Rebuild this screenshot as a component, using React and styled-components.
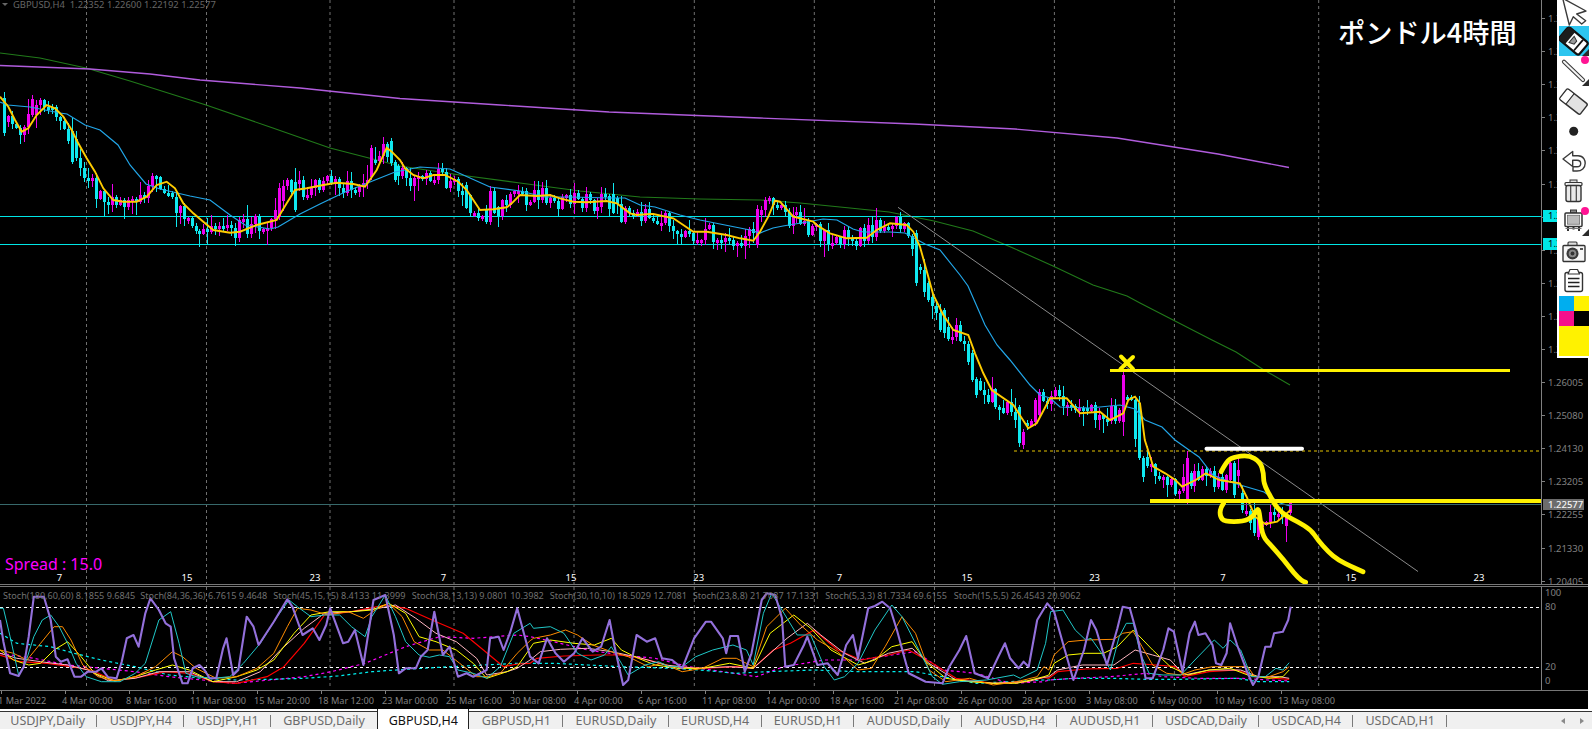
import React from "react";
import styled, { createGlobalStyle } from "styled-components";

const Global = createGlobalStyle`
  html, body { margin: 0; padding: 0; background: #fff; overflow: hidden; }
  #root { width: 1592px; height: 729px; }
`;

/* ---------- data helpers ---------- */
const pts = (bx, by, fx, fy, s) =>
  s.trim().split(/\s+/).map((p) => {
    const [a, b] = p.split(",").map(Number);
    return [bx + a / fx, by + b / fy];
  });
const join = (...lists) => {
  const out = [];
  lists.flat().forEach((p) => {
    if (!out.length || p[0] > out[out.length - 1][0]) out.push(p);
  });
  return out;
};
const poly = (a) => a.map((p) => `${p[0].toFixed(1)},${p[1].toFixed(1)}`).join(" ");
const smoothPath = (a) => {
  let d = `M${a[0][0].toFixed(1)} ${a[0][1].toFixed(1)}`;
  for (let i = 1; i < a.length - 1; i++) {
    const mx = (a[i][0] + a[i + 1][0]) / 2;
    const my = (a[i][1] + a[i + 1][1]) / 2;
    d += `Q${a[i][0].toFixed(1)} ${a[i][1].toFixed(1)} ${mx.toFixed(1)} ${my.toFixed(1)}`;
  }
  const l = a[a.length - 1];
  return `${d}L${l[0].toFixed(1)} ${l[1].toFixed(1)}`;
};
const interp = (line, x) => {
  if (x <= line[0][0]) return line[0][1];
  for (let i = 1; i < line.length; i++) {
    if (x <= line[i][0]) {
      const [x0, y0] = line[i - 1];
      const [x1, y1] = line[i];
      return y0 + ((y1 - y0) * (x - x0)) / (x1 - x0);
    }
  }
  return line[line.length - 1][1];
};
const rng = (seed) => () => {
  seed |= 0;
  seed = (seed + 0x6d2b79f5) | 0;
  let t = Math.imul(seed ^ (seed >>> 15), 1 | seed);
  t = (t + Math.imul(t ^ (t >>> 7), 61 | t)) ^ t;
  return ((t ^ (t >>> 14)) >>> 0) / 4294967296;
};

const F3 = 1568 / 532;
const YELLOW = join(
  pts(0, 0, 3, 3, "0,290 25,320 45,360 65,395 85,385 110,345 140,315 165,325 190,350 215,390 235,430 260,475 285,515 310,565 340,600 370,605 410,605 440,590 470,555 500,545 525,565 550,610 580,640 610,665 640,690 690,698 720,695 770,675 830,660 860,610 885,570 920,565 970,555 1010,548 1060,552 1095,560 1130,510 1160,443 1175,455 1200,480"),
  pts(380, 120, 3, 3, "20,82 35,95 75,145 100,165 130,175 160,165 195,165 235,185 260,210 300,270 340,268 380,262 395,250 420,225 470,228 510,225 540,235 580,245 620,247 680,243 710,250 750,280 770,285 810,282"),
  pts(640, 170, 3, 3, "0,132 40,132 100,145 130,165 160,185 200,185 260,195 300,205 340,212 360,185 385,140 405,92 420,95 460,140 520,155 530,165 570,190 620,205 680,203 710,180 750,160 800,165"),
  pts(880, 190, 3, 3, "0,110 60,100 100,125 120,170 160,315 190,375 220,420 265,435 285,490 310,550 335,600 400,645 445,715 470,700 510,625 560,625 600,670 660,665 690,690 730,670 745,630 765,620 780,640"),
  pts(1060, 340, F3, 3, "235,220 250,300 275,380 310,400 340,420 360,440 400,420 430,400 470,420 530,430 550,470 575,530 605,552 640,545 680,510")
);
const BLUE = [[0,102],[8,105],[30,107],[60,113],[67,114],[85,125],[100,130],[118,145],[130,165],[146,184],[160,189],[190,196],[210,200],[230,215],[245,225],[270,229],[278,227],[300,214],[320,204],[345,192],[380,178],[395,172],[420,167],[450,169],[470,178],[490,187],[520,191],[545,197],[570,197],[610,198],[625,198],[640,205],[655,207],[680,215],[700,220],[720,224],[750,230],[760,233],[773,228],[783,226],[807,222],[823,219],[837,220],[853,229],[863,232],[890,232],[905,233],[925,244],[940,250],[960,275],[968,286],[985,325],[997,345],[1010,360],[1030,385],[1040,395],[1050,398],[1060,407],[1090,408],[1120,405],[1135,409],[1145,420],[1162,427],[1175,440],[1189,450],[1199,457],[1213,475],[1230,482],[1264,492],[1280,503],[1290,506]];
const GREEN = [[0,53],[40,58],[86,68],[130,81],[206,105],[270,127],[330,148],[400,166],[460,175],[520,183],[580,191],[640,197],[700,199],[760,200],[800,203],[850,208],[889,212],[934,221],[973,231],[1013,248],[1053,266],[1093,285],[1127,296],[1140,303],[1212,340],[1236,352],[1264,370],[1290,385]];
const PURPLE = [[0,65.5],[90,69],[150,74],[200,80],[300,88],[400,98.5],[500,105],[609,112],[760,118],[914,124],[1015,129],[1117,138],[1218,154],[1289,167.5]];

/* big candles read from the reference: x, open, close, top wick, bottom wick, bull */
const BIG = [
  [6,98,133,92,136,0],[33,99,115,95,117,1],[73,131,162,118,164,0],[278,188,217,183,220,1],[295,182,210,168,212,0],[370,148,177,145,180,1],[390,141,163,138,166,0],[395,162,180,160,182,0],
  [466,185,208,182,209,0],[487,209,222,205,224,0],[490,191,222,186,225,1],[494,191,213,188,214,0],[614,194,213,183,214,0],
  [758,209,245,205,248,1],[918,233,283,230,286,0],[927,283,300,281,302,0],[943,310,333,308,338,0],[974,353,380,350,382,0],[978,379,395,377,398,0],
  [1018,407,443,405,447,0],[1023,432,445,429,449,1],[1037,400,422,398,426,1],
  [1123,375,422,372,436,1],[1139,403,458,396,460,0],[1143,458,477,456,482,0],[1187,458,501,451,504,1],[1231,463,480,462,483,1],[1235,463,495,461,498,0],[1238,470,476,455,488,1],[1242,493,510,486,513,0],[1254,510,533,503,536,0],[1258,518,537,510,540,1],[1286,517,526,514,542,1],[1290,503,513,500,515,1],
];

const makeCandles = () => {
  const r = rng(73);
  const out = [];
  let prev = interp(YELLOW, 0);
  for (let i = 0; i < 324; i++) {
    const x = 1290 - (323 - i) * 3.98;
    const price = interp(YELLOW, x + 9) + (r() - 0.5) * 19;
    const top = Math.min(prev, price);
    const bot = Math.max(prev, price);
    const bodyBot = Math.max(bot, top + 3);
    out.push({
      x: Math.round(x),
      t: top,
      b: bodyBot,
      h: top - r() * r() * 16 - 1,
      l: bodyBot + r() * r() * 16 + 1,
      up: price < prev,
    });
    prev = price;
  }
  BIG.forEach(([x, o, c, h, l, up]) => {
    let best = 0;
    out.forEach((k, i) => {
      if (Math.abs(k.x - x) < Math.abs(out[best].x - x)) best = i;
    });
    out[best] = { x: out[best].x, t: o, b: c, h, l, up: !!up };
  });
  return out;
};
const CANDLES = makeCandles();
const candlePath = (up) =>
  CANDLES.filter((k) => k.up === up)
    .map((k) => `M${k.x - 1} ${k.t.toFixed(0)}h3V${k.b.toFixed(0)}h-3ZM${k.x} ${k.h.toFixed(0)}h1V${k.l.toFixed(0)}h-1Z`)
    .join("");

const Z = 1568 / 530;
const Z6 = 1568 / 552;
const stochLine = (a, b, c) =>
  join(pts(0, 570, Z, 3, a), pts(520, 570, Z, 3, b), pts(1040, 570, Z6, 3, c));

const STOCH = [
  { color: "#ff00ff", w: 1.2, dash: "3 3",
    d: stochLine("0,250 100,265 200,285 300,295 400,305 500,320 600,330 690,340 800,330 900,320 980,305 1080,280 1200,230 1300,200 1400,205 1530,195",
      "30,200 100,215 200,240 300,255 400,265 500,290 600,305 700,320 780,290 900,270 1000,270 1100,255 1170,245 1250,300 1350,310 1450,340 1550,335",
      "25,330 100,325 200,320 300,310 350,320 450,325 570,325 650,330 708,333") },
  { color: "#00f0f0", w: 1.2, dash: "3 3",
    d: stochLine("0,190 50,220 150,230 220,250 300,270 400,290 500,315 600,325 700,330 800,328 900,325 1000,318 1100,305 1200,298 1300,292 1530,280",
      "30,280 100,280 200,285 300,290 450,295 530,300 640,310 730,305 870,300 1000,305 1170,305 1250,320 1350,340 1550,330",
      "25,330 100,325 200,325 300,328 400,328 560,325 620,335 708,335") },
  { color: "#ff0000", w: 1.2,
    d: stochLine("0,255 60,275 140,280 210,290 270,300 340,333 420,320 490,305 560,310 630,335 700,340 790,320 840,290 900,220 960,135 1040,125 1140,105 1200,115 1290,155 1370,190 1430,240 1490,290 1530,282",
      "30,280 50,265 130,258 230,255 300,255 380,270 450,290 540,295 640,290 690,295 750,240 800,220 870,180 940,240 1010,270 1090,255 1150,240 1220,280 1290,325 1400,340 1500,335 1550,322",
      "25,325 50,305 130,297 220,295 265,280 330,285 385,290 410,320 480,305 560,300 610,320 670,325 708,328") },
  { color: "#ffb6c1", w: 1,
    d: stochLine("0,250 50,265 120,275 200,285 260,300 320,332 400,325 470,305 560,305 630,335 700,335 770,305 830,240 900,175 960,130 1040,125 1120,115 1170,105 1230,145 1290,190 1350,215 1410,265 1440,315 1500,305 1530,295",
      "30,270 60,245 120,238 200,235 270,245 350,262 430,285 520,295 620,290 690,295 740,250 790,205 850,160 890,195 960,250 1020,280 1090,250 1160,235 1210,280 1290,330 1400,340 1500,335 1550,322",
      "25,320 50,300 120,285 210,285 270,240 320,255 370,270 410,315 480,300 570,300 620,320 680,320 708,325") },
  { color: "#ffff00", w: 1,
    d: stochLine("0,240 40,270 85,285 120,280 160,240 200,215 240,260 280,310 340,333 400,320 460,300 510,285 560,300 630,335 700,320 760,300 810,270 870,190 920,135 975,125 1040,125 1100,120 1150,100 1200,130 1240,200 1290,215 1350,240 1400,280 1440,325 1500,305 1530,290",
      "30,235 40,220 90,210 160,220 220,225 270,205 300,240 350,265 400,285 470,295 540,295 620,280 690,295 740,190 810,135 860,175 920,240 1000,285 1050,270 1100,230 1160,215 1200,275 1260,325 1330,335 1400,340 1470,340 1550,320",
      "25,315 40,280 80,255 130,250 180,250 220,230 265,180 320,240 370,290 420,315 480,300 540,295 590,315 650,325 690,320 708,300") },
  { color: "#ff8c00", w: 1,
    d: stochLine("0,240 40,250 80,270 120,220 160,170 185,170 210,210 245,285 290,320 340,333 400,320 460,290 510,245 540,260 580,295 640,325 700,320 760,295 810,250 850,170 880,115 920,120 970,135 1030,125 1075,145 1110,120 1150,100 1190,140 1225,215 1270,240 1310,240 1360,280 1410,320 1445,320 1480,310 1530,250",
      "30,212 40,205 90,195 135,180 170,195 215,225 270,245 320,260 380,290 420,280 480,305 540,295 600,265 640,265 690,290 730,170 785,115 830,165 880,210 940,245 1000,300 1040,295 1080,230 1130,140 1170,190 1210,300 1260,335 1330,325 1400,345 1470,335 1530,320 1550,290",
      "25,300 40,255 80,215 130,210 210,208 235,190 265,185 290,230 320,285 360,310 400,315 440,300 490,290 540,290 590,290 610,320 650,320 690,305 708,290") },
  { color: "#20c8c8", w: 1,
    d: stochLine("0,115 10,115 30,200 55,315 75,280 100,200 125,150 150,135 175,170 200,220 225,280 255,320 300,335 355,335 400,310 430,280 470,150 505,125 530,220 550,310 580,320 630,325 680,320 720,280 770,220 820,140 855,90 880,110 920,140 960,135 1005,135 1040,170 1080,200 1100,140 1140,75 1170,140 1200,215 1240,255 1270,262 1300,255 1330,260 1355,300 1400,310 1440,325 1480,290 1520,190",
      "30,160 40,175 90,170 130,190 170,250 210,270 250,255 270,230 300,280 320,315 370,285 410,275 440,290 480,290 520,260 570,240 630,225 670,240 690,285 720,130 745,70 790,145 820,195 860,195 900,290 930,330 960,320 1000,280 1050,180 1100,105 1130,140 1180,240 1220,320 1250,343 1300,335 1380,330 1460,315 1480,325 1530,300 1555,220",
      "30,125 65,120 100,180 130,210 145,205 175,250 200,300 225,200 245,160 265,160 285,250 310,310 350,315 400,315 440,270 495,210 520,235 540,210 570,240 600,320 640,320 670,295 690,300 708,278") },
  { color: "#9370db", w: 2.1,
    d: stochLine("0,150 10,215 30,310 55,318 70,290 85,200 100,80 130,80 150,150 165,260 180,275 200,268 220,320 240,320 260,305 285,305 300,295 320,322 345,325 360,275 375,205 395,195 410,230 430,130 445,85 470,120 490,160 505,170 515,265 540,340 555,340 570,295 590,285 605,300 620,325 640,325 660,235 670,205 690,315 705,300 730,140 750,170 765,225 810,155 850,88 865,110 895,195 925,175 945,210 965,165 977,115 1015,220 1030,215 1050,180 1075,285 1105,90 1140,75 1165,195 1180,310 1200,295 1230,295 1245,260 1265,240 1285,125 1310,255 1330,230 1355,320 1380,310 1400,320 1440,300 1450,205 1475,200 1490,240 1510,185 1530,115",
      "30,260 55,280 80,205 105,250 130,275 160,250 185,205 215,245 240,230 265,150 280,230 305,345 320,330 345,195 375,215 400,205 420,265 450,270 480,295 515,205 550,155 565,155 600,205 610,250 622,198 645,198 665,305 685,250 715,90 730,70 755,75 775,145 785,290 810,285 840,225 850,200 880,285 910,280 940,315 965,225 985,195 1000,265 1030,115 1050,108 1072,95 1095,115 1115,180 1150,310 1200,335 1250,340 1270,290 1300,240 1320,198 1345,310 1385,325 1415,260 1435,220 1450,265 1475,295 1490,275 1505,290 1530,150 1560,100",
      "40,125 65,220 95,330 125,240 145,150 160,180 190,285 220,175 235,110 255,115 275,190 300,325 320,325 350,240 365,175 380,185 405,305 425,190 440,155 450,195 470,190 490,225 500,280 515,285 530,250 540,160 560,225 590,310 605,345 620,320 640,230 655,230 665,190 690,185 705,150 712,110") },
];

const HAND_A = pts(1060, 340, F3, 3, "475,395 490,365 510,352 555,345 590,365 600,400 600,430 620,470 640,505 670,530 700,545 740,570 760,600 790,635 820,660 860,680 893,695");
const HAND_B = pts(1060, 340, F3, 3, "482,490 472,505 472,530 485,545 540,545 570,530 585,500 590,540 598,590 625,620 660,660 690,700 712,722 724,727");

const GRID = [86.5, 206.5, 330, 454, 574, 694.3, 814.3, 934.5, 1054.4, 1174.4, 1318.7];
const DAYS = [[59.5,"7"],[187,"15"],[315,"23"],[443.5,"7"],[571,"15"],[698.8,"23"],[839.5,"7"],[967,"15"],[1094.6,"23"],[1223,"7"],[1351,"15"],[1479,"23"]];
const PRICES = ["1.36305","1.35380","1.34430","1.33505","1.32555","1.31630","1.30680","1.29755","1.28805","1.27880","1.26930","1.26005","1.25080","1.24130","1.23205","1.22255","1.21330","1.20405"];
const TIMES = ["1 Mar 2022","4 Mar 00:00","8 Mar 16:00","11 Mar 08:00","15 Mar 20:00","18 Mar 12:00","23 Mar 00:00","25 Mar 16:00","30 Mar 08:00","4 Apr 00:00","6 Apr 16:00","11 Apr 08:00","14 Apr 00:00","18 Apr 16:00","21 Apr 08:00","26 Apr 00:00","28 Apr 16:00","3 May 08:00","6 May 00:00","10 May 16:00","13 May 08:00"];
const STOCH_LABELS = [
  ["Stoch(180,60,60) 8.1855 9.6845", 137.3],
  ["Stoch(84,36,36) 6.7615 9.4648", 133],
  ["Stoch(45,15,15) 8.4133 11.3999", 138.4],
  ["Stoch(38,13,13) 9.0801 10.3982", 138],
  ["Stoch(30,10,10) 18.5029 12.7081", 143],
  ["Stoch(23,8,8) 21.7087 17.1331", 132.6],
  ["Stoch(5,3,3) 81.7334 69.6155", 128.4],
  ["Stoch(15,5,5) 26.4543 20.9062", 127],
];
const TABS = ["USDJPY,Daily","USDJPY,H4","USDJPY,H1","GBPUSD,Daily","GBPUSD,H4","GBPUSD,H1","EURUSD,Daily","EURUSD,H4","EURUSD,H1","AUDUSD,Daily","AUDUSD,H4","AUDUSD,H1","USDCAD,Daily","USDCAD,H4","USDCAD,H1"];

/* ---------- styled parts ---------- */
const Screen = styled.div`
  position: relative;
  width: 1592px;
  height: 729px;
  display: flex;
  flex-direction: column;
  background: #fff;
  overflow: hidden;
  font-family: "Noto Sans", "Liberation Sans", sans-serif;
`;
const Terminal = styled.div`
  width: 1588px;
  height: 709px;
  flex: none;
  background: #000;
  display: flex;
  flex-direction: column;
`;
const MainPane = styled.div`
  display: flex;
  height: 584px;
  flex: none;
  border-bottom: 1px solid #777;
`;
const Plot = styled.div`
  position: relative;
  width: 1541px;
  flex: none;
  overflow: hidden;
`;
const Drawing = styled.svg`
  display: block;
`;
const DayText = styled.text`
  font-family: "Noto Sans", sans-serif;
  font-size: 9.5px;
  fill: #fff;
  text-anchor: middle;
`;
const PriceAxis = styled.div`
  position: relative;
  flex: 1;
  border-left: 1px solid #808080;
  padding-top: 2px;
  display: flex;
  flex-direction: column;
`;
const PriceLabel = styled.div`
  height: 33.1px;
  flex: none;
  display: flex;
  align-items: center;
  gap: 3px;
  font-size: 9.5px;
  color: #808080;
  &::before {
    content: "";
    width: 3px;
    height: 1px;
    background: #808080;
  }
`;
const PriceTag = styled.div`
  position: absolute;
  left: 1px;
  top: ${(p) => p.$top}px;
  height: ${(p) => p.$h}px;
  width: ${(p) => p.$w}px;
  padding-left: 5px;
  box-sizing: border-box;
  background: ${(p) => p.$bg};
  color: ${(p) => p.$fg};
  font-size: 9.5px;
  font-weight: ${(p) => p.$weight || 400};
  line-height: ${(p) => p.$h}px;
`;
const ChartHeader = styled.div`
  position: absolute;
  left: 2px;
  top: -2px;
  display: flex;
  align-items: center;
  gap: 5px;
  font-size: 9.4px;
  line-height: 13px;
  color: #666;
  white-space: pre;
`;
const HeaderCaret = styled.span`
  width: 0;
  height: 0;
  border-left: 3px solid transparent;
  border-right: 3px solid transparent;
  border-top: 3px solid #666;
`;
const ChartTitle = styled.div`
  position: absolute;
  left: 1338px;
  top: 11px;
  font-family: "Noto Sans CJK JP", "Noto Sans", sans-serif;
  font-size: 27.2px;
  font-weight: 500;
  line-height: 40px;
  color: #fff;
  white-space: nowrap;
`;
const SpreadText = styled.div`
  position: absolute;
  left: 5px;
  top: 555px;
  font-size: 16px;
  line-height: 18px;
  color: #ff00ff;
`;
const IndicatorPane = styled.div`
  display: flex;
  height: 103px;
  flex: none;
  margin-top: 1px;
  border-top: 1px solid #777;
  border-bottom: 1px solid #777;
`;
const LegendRow = styled.div`
  position: absolute;
  left: 3px;
  top: 2px;
  display: flex;
  font-size: 9.1px;
  line-height: 13px;
  color: #707070;
  white-space: nowrap;
`;
const LegendItem = styled.span`
  flex: none;
`;
const LevelAxis = styled.div`
  position: relative;
  flex: 1;
  border-left: 1px solid #808080;
`;
const LevelLabel = styled.span`
  position: absolute;
  left: 3px;
  top: ${(p) => p.$top}px;
  font-size: 9.5px;
  line-height: 12px;
  color: #808080;
`;
const TimeAxis = styled.div`
  flex: 1;
  display: flex;
  margin-left: -2px;
  overflow: hidden;
`;
const TimeLabel = styled.span`
  flex: none;
  width: 64px;
  display: flex;
  flex-direction: column;
  font-size: 9.2px;
  line-height: 13px;
  color: #808080;
  white-space: nowrap;
  &::before {
    content: "";
    display: block;
    width: 1px;
    height: 3px;
    margin: 0 0 0 3px;
    background: #808080;
  }
`;
const TabBar = styled.div`
  flex: 1;
  margin-top: 2px;
  display: flex;
  position: relative;
  background: #f0f0f0;
  border-top: 1px solid #333;
`;
const TabStrip = styled.div`
  display: flex;
  margin-left: -2px;
`;
const Tab = styled.div`
  position: relative;
  flex: none;
  padding: 0 ${(p) => (p.$active ? "10.5px" : "12.3px")};
  height: 18px;
  margin-top: ${(p) => (p.$active ? "-3px" : "0")};
  margin-bottom: ${(p) => (p.$active ? "-3px" : "0")};
  box-sizing: content-box;
  padding-top: ${(p) => (p.$active ? "3px" : "0")};
  font-size: 12.5px;
  line-height: 17px;
  color: ${(p) => (p.$active ? "#111" : "#6c6c6c")};
  background: ${(p) => (p.$active ? "#fff" : "transparent")};
  border-left: ${(p) => (p.$active ? "1px solid #222" : "none")};
  border-right: ${(p) => (p.$active ? "1px solid #222" : "none")};
  &::after {
    content: "";
    display: ${(p) => (p.$sep ? "block" : "none")};
    position: absolute;
    right: 0;
    top: 3px;
    bottom: 3px;
    width: 1px;
    background: #7a7a7a;
  }
`;
const ScrollArrows = styled.div`
  position: absolute;
  right: 8px;
  top: 6px;
  display: flex;
  gap: 15px;
`;
const ScrollArrow = styled.span`
  width: 0;
  height: 0;
  border-top: 3px solid transparent;
  border-bottom: 3px solid transparent;
  border-${(p) => (p.$left ? "right" : "left")}: 4px solid #8a8a8a;
`;
const Toolbar = styled.div`
  position: absolute;
  right: 0;
  top: 0;
  width: 35px;
  height: 358px;
  background: #fff;
  box-sizing: border-box;
  padding: 0 3px 0 2px;
  display: flex;
  flex-direction: column;
`;
const Tool = styled.div`
  position: relative;
  flex: none;
  width: 30px;
  height: ${(p) => p.$h || 30}px;
  background: ${(p) => (p.$active ? "#2dc5ef" : "transparent")};
`;
const Corner = styled.span`
  position: absolute;
  right: 0;
  bottom: 0;
  width: 0;
  height: 0;
  border-left: 7px solid transparent;
  border-bottom: 7px solid #2a2a2a;
`;
const PinkDot = styled.span`
  position: absolute;
  right: 0;
  top: ${(p) => p.$top}px;
  width: 8px;
  height: 8px;
  border-radius: 50%;
  background: #ff1493;
`;
const Palette = styled.div`
  flex: none;
  display: grid;
  grid-template-columns: 15px 15px;
  grid-template-rows: 15px 15px 30px;
`;
const Swatch = styled.span`
  background: ${(p) => p.$c};
  grid-column: ${(p) => (p.$wide ? "1 / 3" : "auto")};
`;

/* ---------- icons ---------- */
const Ico = ({ children, h = 30 }) => (
  <Drawing width="30" height={h} viewBox={`0 0 30 ${h}`}>{children}</Drawing>
);
const ArrowIcon = () => (
  <Ico h={26}>
    <path d="M3.7 -1.7L27 11 17.7 14 26.7 20.7 22.7 24 14.3 16.7 10.3 25Z" fill="#fff" stroke="#3a3a3a" strokeWidth="1.4" strokeLinejoin="round" />
  </Ico>
);
const BrushIcon = () => (
  <Ico>
    <g transform="rotate(40 14.5 15)">
      <rect x="1.5" y="7" width="26" height="16" rx="2.5" fill="#fff" stroke="#111" strokeWidth="2.2" />
      <path d="M1.5 9.5a2.5 2.5 0 0 1 2.5-2.5h6v16h-6a2.5 2.5 0 0 1-2.5-2.5Z" fill="#1c1c1c" />
      <path d="M12 11l5 2v4l-5 2Z" fill="#9a9a9a" stroke="#333" strokeWidth="1" />
      <path d="M21 8v14" stroke="#111" strokeWidth="1.8" />
    </g>
  </Ico>
);
const LineIcon = () => (
  <Ico>
    <path d="M5 5.7L24 24" stroke="#3c3c3c" strokeWidth="4.2" strokeLinecap="round" />
    <path d="M5 5.7L24 24" stroke="#f4f4f4" strokeWidth="2" strokeLinecap="round" />
  </Ico>
);
const EraserIcon = () => (
  <Ico>
    <g transform="rotate(38 14.7 15.7)">
      <rect x="1.5" y="9" width="26" height="13.5" rx="2" fill="#e2e2e2" stroke="#333" strokeWidth="1.5" />
      <path d="M10 9v13.5" stroke="#333" strokeWidth="1.3" />
      <rect x="2.3" y="9.8" width="7" height="12" fill="#fff" />
    </g>
  </Ico>
);
const DotIcon = () => (
  <Ico>
    <circle cx="14.7" cy="15.3" r="4.5" fill="#222" />
  </Ico>
);
const UndoIcon = () => (
  <Ico>
    <path d="M4 13L13.7 5.5V9.7H19C25 9.7 26.2 15 26.2 17.3 26.2 22 22.5 25 18 25H14V20.8H18C20.5 20.8 21.7 19.2 21.7 17.5 21.7 15 19.7 14.2 18 14.2H13.7V20.5Z" fill="#fff" stroke="#3a3a3a" strokeWidth="1.4" strokeLinejoin="round" />
  </Ico>
);
const TrashIcon = () => (
  <Ico>
    <rect x="11" y="4" width="7" height="2.6" fill="#ddd" stroke="#333" strokeWidth="1" />
    <rect x="6" y="6.5" width="17" height="3" rx="1" fill="#eee" stroke="#333" strokeWidth="1.2" />
    <rect x="7" y="9.5" width="15" height="16" rx="2" fill="#eaeaea" stroke="#333" strokeWidth="1.4" />
    <path d="M11.7 10v15M17.3 10v15" stroke="#444" strokeWidth="1.2" />
  </Ico>
);
const EaselIcon = () => (
  <Ico>
    <rect x="11.5" y="4" width="6" height="3" fill="#888" stroke="#333" strokeWidth="1" />
    <rect x="6" y="7" width="17" height="13.5" rx="1" fill="#fff" stroke="#333" strokeWidth="1.5" />
    <rect x="8.3" y="9.2" width="12.4" height="9" fill="#bcbcbc" stroke="#555" strokeWidth=".6" />
    <path d="M9 20.5v4.5M20 20.5v4.5M14.5 20.5v3" stroke="#333" strokeWidth="2" />
    <path d="M6.5 22.5h16" stroke="#777" strokeWidth="1" />
  </Ico>
);
const CameraIcon = () => (
  <Ico>
    <rect x="9" y="6" width="9" height="4" rx="1" fill="#ddd" stroke="#333" strokeWidth="1.1" />
    <rect x="4" y="9.5" width="22" height="16" rx="1" fill="#f7f7f7" stroke="#333" strokeWidth="1.4" />
    <circle cx="13.5" cy="17.5" r="6" fill="#3a3a3a" />
    <circle cx="13.5" cy="17.5" r="3.8" fill="#8a8a8a" />
    <circle cx="13.5" cy="17.5" r="1.9" fill="#333" />
    <rect x="21" y="12" width="3" height="2" fill="#555" />
  </Ico>
);
const ClipboardIcon = () => (
  <Ico>
    <rect x="6" y="6.5" width="17.5" height="19" rx="2" fill="#fff" stroke="#333" strokeWidth="1.4" />
    <path d="M11 3.5h7.5l2 4.5h-11.5Z" fill="#fff" stroke="#333" strokeWidth="1.2" strokeLinejoin="round" />
    <path d="M9 12.5h11.5M9 16.5h11.5M9 20.5h11.5" stroke="#222" strokeWidth="1.3" />
  </Ico>
);

/* ---------- chart drawings ---------- */
const MainDrawing = () => (
  <Drawing width="1541" height="584" viewBox="0 0 1541 584">
    {GRID.map((x) => (
      <line key={x} x1={x} x2={x} y1="0" y2="584" stroke="#707070" strokeDasharray="3 3" />
    ))}
    <polyline points={poly(GREEN)} fill="none" stroke="#217a1a" strokeWidth="1.1" />
    <polyline points={poly(PURPLE)} fill="none" stroke="#b05cdc" strokeWidth="1.3" />
    <line x1="0" x2="1541" y1="216.5" y2="216.5" stroke="#00e6e6" strokeWidth="1" />
    <line x1="0" x2="1541" y1="244.5" y2="244.5" stroke="#00e6e6" strokeWidth="1" />
    <path d={candlePath(true)} fill="#ee00ee" shapeRendering="crispEdges" />
    <path d={candlePath(false)} fill="#10e8f0" shapeRendering="crispEdges" />
    <polyline points={poly(BLUE)} fill="none" stroke="#22a6e8" strokeWidth="1.2" />
    <polyline points={poly(YELLOW)} fill="none" stroke="#ffcc00" strokeWidth="1.9" />
    <line x1="898" y1="207.3" x2="1418" y2="571.5" stroke="#8a8a8a" strokeWidth="1" />
    <line x1="1014" x2="1541" y1="451" y2="451" stroke="#e6c400" strokeDasharray="3 3" />
    <line x1="0" x2="1541" y1="504.5" y2="504.5" stroke="#37696b" strokeWidth="1" />
    <line x1="1110" x2="1510" y1="370.5" y2="370.5" stroke="#fff200" strokeWidth="3" />
    <line x1="1150" x2="1541" y1="501" y2="501" stroke="#fff200" strokeWidth="4" />
    <line x1="1206.5" x2="1302" y1="448.7" y2="448.7" stroke="#fff" strokeWidth="4" strokeLinecap="round" />
    <path d="M1121 356.5L1133 369M1133 357L1120.5 369" stroke="#fff200" strokeWidth="4" strokeLinecap="round" fill="none" />
    <path d={smoothPath(HAND_A)} fill="none" stroke="#fff200" strokeWidth="4.8" strokeLinecap="round" strokeLinejoin="round" />
    <path d={smoothPath(HAND_B)} fill="none" stroke="#fff200" strokeWidth="4.8" strokeLinecap="round" strokeLinejoin="round" />
    {DAYS.map(([x, t]) => (
      <DayText key={x} x={x} y="581">{t}</DayText>
    ))}
  </Drawing>
);
const IndicatorDrawing = () => (
  <Drawing width="1541" height="101" viewBox="0 587 1541 101">
    {GRID.map((x) => (
      <line key={x} x1={x} x2={x} y1="587" y2="688" stroke="#707070" strokeDasharray="3 3" />
    ))}
    <line x1="0" x2="1541" y1="607.5" y2="607.5" stroke="#fff" strokeDasharray="3 3" />
    <line x1="0" x2="1541" y1="667.5" y2="667.5" stroke="#fff" strokeDasharray="3 3" />
    {STOCH.map((s, i) => (
      <polyline key={i} points={poly(s.d)} fill="none" stroke={s.color} strokeWidth={s.w} strokeDasharray={s.dash} strokeLinejoin="round" />
    ))}
  </Drawing>
);

export default function App() {
  return (
    <Screen>
      <Global />
      <Terminal>
        <MainPane>
          <Plot>
            <MainDrawing />
            <ChartHeader>
              <HeaderCaret />
              <span>GBPUSD,H4  1.22352 1.22600 1.22192 1.22577</span>
            </ChartHeader>
            <ChartTitle>ポンドル4時間</ChartTitle>
            <SpreadText>Spread : 15.0</SpreadText>
          </Plot>
          <PriceAxis>
            {PRICES.map((p) => (
              <PriceLabel key={p}>{p}</PriceLabel>
            ))}
            <PriceTag $top={210} $h={12} $w={42} $bg="#00e6e6" $fg="#000">1.31630</PriceTag>
            <PriceTag $top={238} $h={12} $w={42} $bg="#00e6e6" $fg="#000">1.30680</PriceTag>
            <PriceTag $top={499} $h={11} $w={41} $bg="#6c6c6c" $fg="#f4f4f4" $weight={500}>1.22577</PriceTag>
          </PriceAxis>
        </MainPane>
        <IndicatorPane>
          <Plot>
            <IndicatorDrawing />
            <LegendRow>
              {STOCH_LABELS.map(([t, w]) => (
                <LegendItem key={t} style={{ width: w }}>{t}</LegendItem>
              ))}
            </LegendRow>
          </Plot>
          <LevelAxis>
            <LevelLabel $top={0}>100</LevelLabel>
            <LevelLabel $top={14}>80</LevelLabel>
            <LevelLabel $top={74}>20</LevelLabel>
            <LevelLabel $top={88}>0</LevelLabel>
          </LevelAxis>
        </IndicatorPane>
        <TimeAxis>
          {TIMES.map((t) => (
            <TimeLabel key={t}>{t}</TimeLabel>
          ))}
        </TimeAxis>
      </Terminal>
      <TabBar>
        <TabStrip>
          {TABS.map((t, i) => (
            <Tab key={t} $active={i === 4} $sep={i !== 3 && i !== 4}>{t}</Tab>
          ))}
        </TabStrip>
        <ScrollArrows>
          <ScrollArrow $left />
          <ScrollArrow />
        </ScrollArrows>
      </TabBar>
      <Toolbar>
        <Tool $h={26}><ArrowIcon /></Tool>
        <Tool $active><BrushIcon /><Corner /></Tool>
        <Tool><LineIcon /><PinkDot $top={0} /><Corner /></Tool>
        <Tool><EraserIcon /></Tool>
        <Tool><DotIcon /></Tool>
        <Tool><UndoIcon /></Tool>
        <Tool><TrashIcon /></Tool>
        <Tool><EaselIcon /><PinkDot $top={1} /><Corner /></Tool>
        <Tool><CameraIcon /></Tool>
        <Tool><ClipboardIcon /></Tool>
        <Palette>
          <Swatch $c="#00aeef" />
          <Swatch $c="#fff200" />
          <Swatch $c="#f50f8c" />
          <Swatch $c="#000" />
          <Swatch $c="#fff200" $wide />
        </Palette>
      </Toolbar>
    </Screen>
  );
}
